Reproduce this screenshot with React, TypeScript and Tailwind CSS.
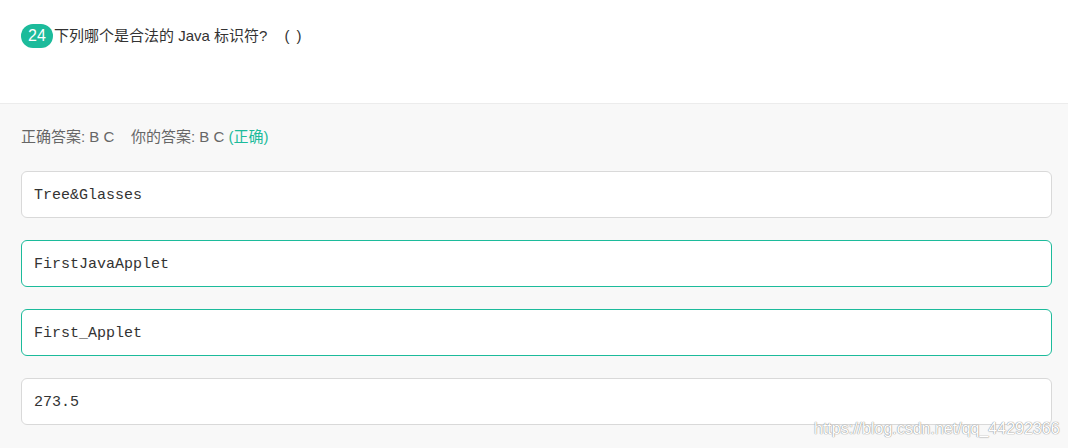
const options = [
  { text: 'Tree&Glasses', picked: false },
  { text: 'FirstJavaApplet', picked: true },
  { text: 'First_Applet', picked: true },
  { text: '273.5', picked: false },
];

export default function App() {
  return (
    <div className="relative h-[448px] w-[1068px] overflow-hidden bg-[#f8f8f8] font-['Liberation_Sans','Noto_Sans_CJK_SC',sans-serif]">
      <div className="h-[104px] border-b border-[#ececec] bg-white px-[21px] pt-[24px]">
        <div className="flex items-center text-[15px] text-[#333]">
          <span className="flex h-[24px] w-[32px] items-center justify-center rounded-full bg-[#1cbb9b] text-[16px] text-white">
            24
          </span>
          <span className="ml-[1px]">下列哪个是合法的 Java 标识符?</span>
          <span className="ml-[17px]">(</span>
          <span className="ml-[7px]">)</span>
        </div>
      </div>
      <div className="px-[21px] pt-[23px]">
        <div className="whitespace-pre text-[15px] leading-[20px] text-[#666]">
          正确答案: B C    你的答案: B C <span className="text-[#1cbb9b]">(正确)</span>
        </div>
        <div className="mt-[24px] flex flex-col gap-[22px]">
          {options.map((o) => (
            <div
              key={o.text}
              className={
                o.picked
                  ? 'flex h-[47px] w-[1031px] items-center rounded-[6px] border border-[#1cbb9b] bg-white px-[12px] pt-[4px]'
                  : 'flex h-[47px] w-[1031px] items-center rounded-[6px] border border-[#d9d9d9] bg-white px-[12px] pt-[4px]'
              }
            >
              <span className="font-['Liberation_Mono',monospace] text-[15px] text-[#333]">{o.text}</span>
            </div>
          ))}
        </div>
      </div>
      <div className="absolute left-[814px] top-[418px] font-['Liberation_Sans',sans-serif] text-[16px] leading-[22px] text-white [text-shadow:0_0_1px_#8a8a8a,0_0_1px_#8a8a8a]">
        https://blog.csdn.net/qq_44292366
      </div>
    </div>
  );
}
